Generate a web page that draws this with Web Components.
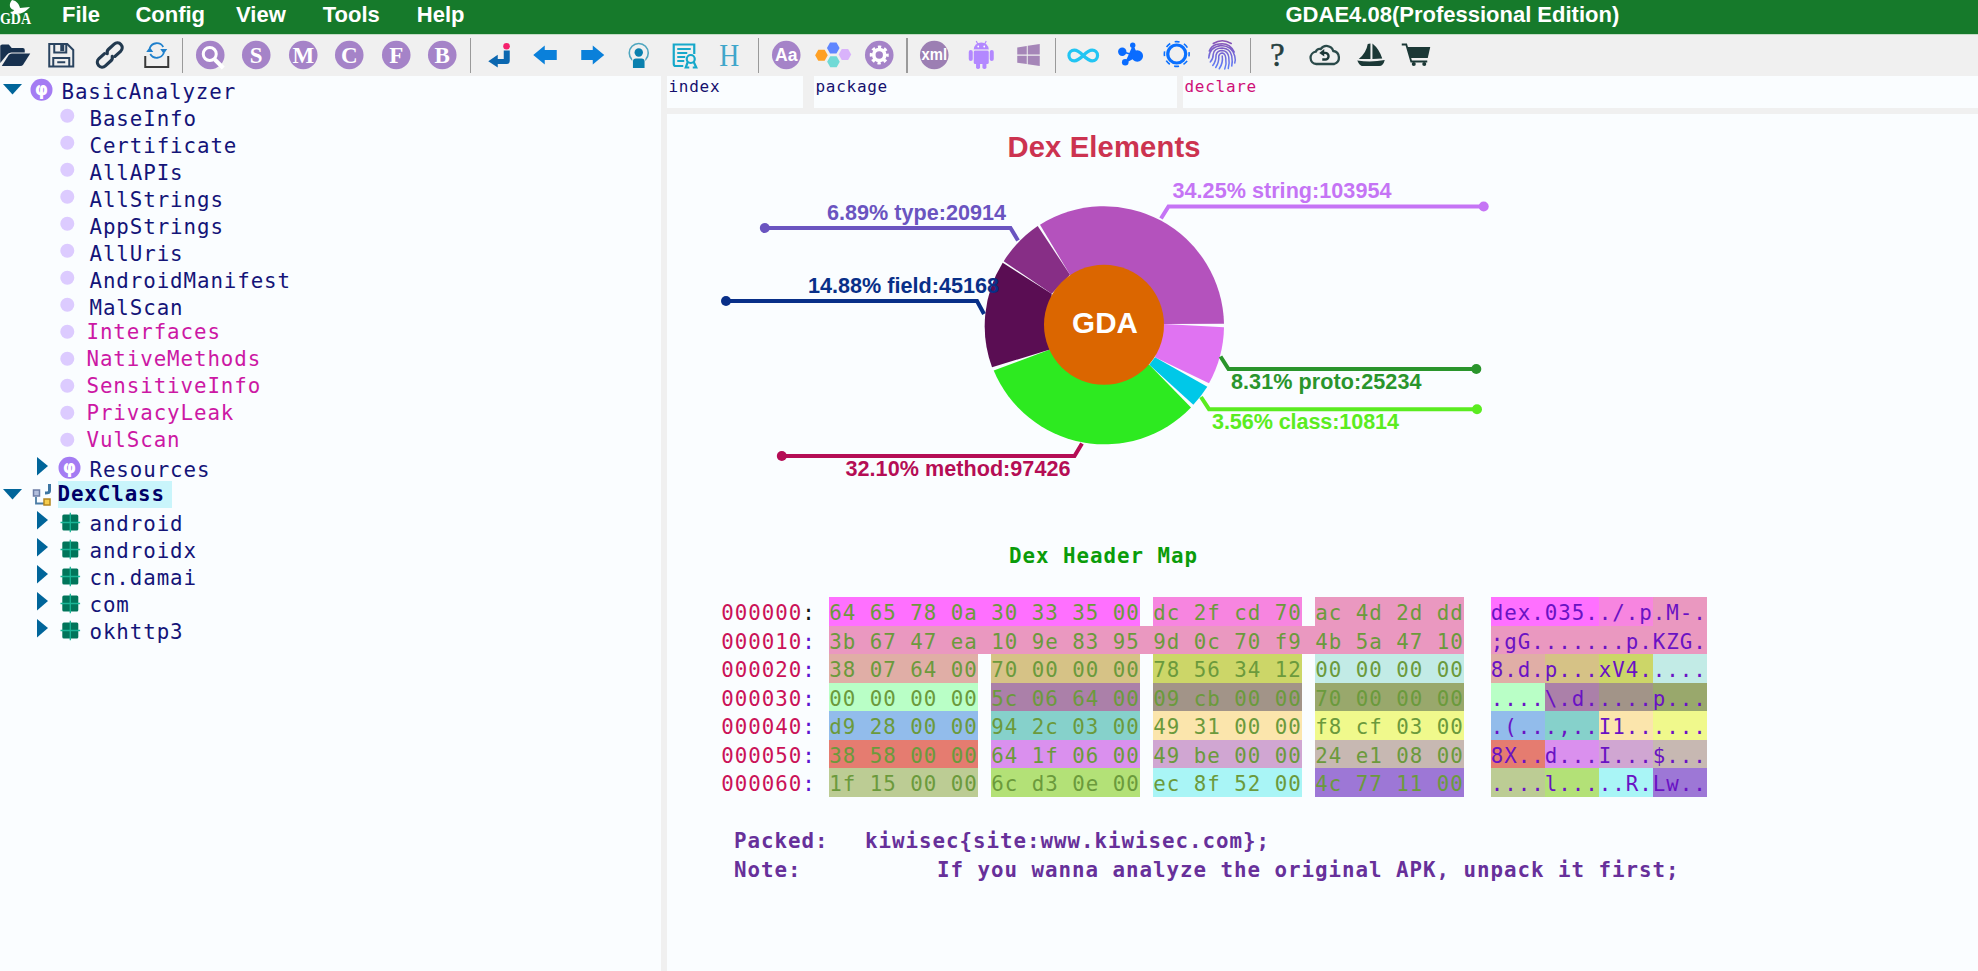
<!DOCTYPE html>
<html lang="en">
<head>
<meta charset="utf-8">
<title>GDAE4.08(Professional Edition)</title>
<style>
    html, body {
        margin: 0;
        height: 100%;
        overflow: hidden;
        background: #f0f0f0;
    }
</style>
</head>
<body>
<gda-window>
    <menu-bar slot="menu" caption="GDAE4.08(Professional Edition)"></menu-bar>
    <tool-bar slot="tools"></tool-bar>
    <class-tree slot="tree"></class-tree>
    <column-header slot="header"></column-header>
    <element-chart slot="page"></element-chart>
    <header-map slot="page"></header-map>
    <packer-note slot="page"></packer-note>
</gda-window>

<script>
class GdaWindow extends HTMLElement {
    constructor() {
        super();
        this.attachShadow({ mode: 'open' });
        this.shadowRoot.innerHTML = `
        <style>
            :host {
                display: flex;
                flex-direction: column;
                height: 971px;
                font-family: "DejaVu Sans Mono", monospace;
                --paper: #fafdff;
            }
            .body {
                flex: 1;
                display: flex;
                gap: 6px;
                min-height: 0;
            }
            .left {
                width: 661px;
                background: var(--paper);
            }
            .right {
                flex: 1;
                display: flex;
                flex-direction: column;
                gap: 6px;
                min-width: 0;
            }
            .page {
                flex: 1;
                background: var(--paper);
                overflow: hidden;
            }
        </style>
        <slot name="menu"></slot>
        <slot name="tools"></slot>
        <div class="body">
            <div class="left"><slot name="tree"></slot></div>
            <div class="right">
                <slot name="header"></slot>
                <div class="page"><slot name="page"></slot></div>
            </div>
        </div>
        `;
    }
}

class MenuBar extends HTMLElement {
    constructor() {
        super();
        this.attachShadow({ mode: 'open' });
        this.shadowRoot.innerHTML = `
        <style>
            :host {
                display: flex;
                box-sizing: border-box;
                height: 35px;
                border-bottom: 1px solid #c4dcc6;
                background: #167a2b;
                color: white;
                font: bold 22px/29px "Liberation Sans", Arial, sans-serif;
                white-space: nowrap;
            }
            svg { width: 62px; height: 30px; flex: none; }
            .items { display: flex; width: 1223.5px; }
            .items span { margin-right: 37px; }
            .items span:nth-child(1) { margin-right: 35.5px; }
            .items span:nth-child(2) { margin-right: 31px; }
        </style>
        <svg viewBox="0 0 62 30">
            <path fill="#fff" d="M12 0C17 1 19 4 20 8L30 7C26 11 23 14 16 14C13 14 11 13 10 12C12 12 14 11 14 10C10 9 8 5 12 0Z"/>
            <text x="0" y="24" font-family="Liberation Serif, serif" font-weight="bold" font-size="16" textLength="31" lengthAdjust="spacingAndGlyphs" fill="#fff">GDA</text>
        </svg>
        <div class="items">
            <span>File</span><span>Config</span><span>View</span><span>Tools</span><span>Help</span>
        </div>
        <span class="caption"></span>
        `;
    }
    connectedCallback() {
        this.shadowRoot.querySelector('.caption').textContent = this.getAttribute('caption');
    }
}

const LILAC = '#a583c8';
const disc = (content, fill = LILAC) => `<circle r="14.3" fill="${fill}"/>${content}`;
const letter = (ch) => disc(`<text y="7.500" text-anchor="middle" font-family="Liberation Serif, serif" font-weight="bold" font-size="23" fill="#fff">${ch}</text>`);
const hexagon = (x, y, fill) => `<path transform="translate(${x} ${y})" fill="${fill}" d="M-6.3 0L-3.2-5.5H3.2L6.3 0L3.2 5.5H-3.2Z"/>`;

// every glyph is drawn around 0,0, the middle of its cell
const ICONS = {
    open: `<g fill="#17314f"><path d="M-15 8V-9q0-1.5 2-1.5h6.500l3 3.500h11q2 0 2 2v2.500h-13.500q-3 0-4.500 2.500z"/><path d="M-13.500 11l7-11q1-1.500 3-1.500h18.500l-7 11q-1 1.500-3 1.500z"/></g>`,
    save: `<g fill="none" stroke="#2a4460" stroke-width="2"><path d="M-12-11H6l6 6V11.500H-12Z"/><path d="M-7-11v8.500H5V-11"/><path d="M-8 11V3H8v8M-4 7.200H4"/></g><rect x="-1" y="-10" width="4" height="6" fill="#2a4460"/>`,
    link: `<g transform="translate(1.500 0) rotate(-42)" fill="none" stroke="#22394f" stroke-width="3.200" stroke-linecap="round"><path d="M-3-4.500h-7.500a4.800 4.800 0 0 0 0 9.600H-3a4.800 4.800 0 0 0 4-2.500"/><path d="M3 4.500h7.500a4.800 4.800 0 0 0 0-9.600H3a4.800 4.800 0 0 0-4 2.500"/></g>`,
    sync: `<path d="M-9 1V12H14V1" fill="none" stroke="#3a3a3a" stroke-width="2"/><path d="M-4.500-7a7.500 7.500 0 0 1 13.500-1M9.500-2a7.500 7.500 0 0 1-13.500 1" fill="none" stroke="#2080cc" stroke-width="1.800"/><path fill="#2080cc" d="M6-6h7l-3.500 5zM-1-3h-7l3.500-5z"/>`,
    search: disc(`<circle cx="-.5" cy="-1" r="6.500" fill="none" stroke="#fff" stroke-width="3"/><path d="M4.500 4.500L13 13" stroke="#fff" stroke-width="4"/>`),
    s: letter('S'),
    m: letter('M'),
    c: letter('C'),
    f: letter('F'),
    b: letter('B'),
    enter: `<path fill="#0b67b0" d="M5.500-4.500h6V6q0 3-3 3H-.5v3.500L-10 6.200L-.5-.2V4h6z"/><circle cx="8.300" cy="-8.700" r="3.300" fill="#f5206c"/>`,
    back: `<path fill="#0a80da" d="M-11 0L.5-9.500V-5H12.500V5H.5V9.500z"/>`,
    forward: `<path fill="#0a80da" d="M13 0L1.500-9.500V-5H-10V5H1.500V9.500z"/>`,
    person: `<g transform="translate(1.500 0)"><circle cy="-2" r="9.500" fill="none" stroke="#4fa6bf" stroke-width="1.600"/><rect x="-6.500" y="3" width="13" height="11" fill="#f0f0f0"/><circle cy="-2.500" r="4.200" fill="#0a80ae"/><path fill="#0a80ae" d="M-5.800 13V6.500q0-3 3-3H2.800q3 0 3 3V13z"/></g>`,
    cert: `<g fill="none" stroke="#16a8ca" stroke-width="2.200"><path d="M-1 11H-8.500q-2 0-2-2V-10.500H10V-1"/><path d="M-7-6H6.500M-7-2H3M-7 2H1M-7 6H0" stroke-width="1.800"/><circle cx="6.500" cy="4" r="4"/><path d="M3.500 7L1.500 12.500h3.500M9.500 7L12 12.500H8.500"/></g>`,
    h: `<text x="-1" y="10.500" text-anchor="middle" font-family="Liberation Serif, serif" font-size="32" textLength="20" lengthAdjust="spacingAndGlyphs" fill="#3fa6ca">H</text>`,
    aa: disc(`<text y="6" text-anchor="middle" font-family="Liberation Sans, sans-serif" font-weight="bold" font-size="17.500" fill="#fff">Aa</text>`),
    hexes: hexagon(-10.8, .3, '#ffa024') + hexagon(1, -7, '#5f86ff') + hexagon(12.7, -.5, '#d9b3fb') + hexagon(1.2, 6.7, '#70dad6'),
    gear: disc(`<circle r="5.500" fill="none" stroke="#fff" stroke-width="3.600"/><circle r="8" fill="none" stroke="#fff" stroke-width="3" stroke-dasharray="3.283 3" stroke-dashoffset="1.600"/>`),
    xml: disc(`<text y="5" text-anchor="middle" font-family="Liberation Sans, sans-serif" font-weight="bold" font-size="16" textLength="25.500" lengthAdjust="spacingAndGlyphs" fill="#fff">xml</text>`, '#9c7fb3'),
    android: `<g fill="#b388ff"><path d="M-7.500-5.500a7.500 7 0 0 1 15 0z"/><rect x="-7.500" y="-4.500" width="15" height="13.500" rx="1.500"/><rect x="-12.500" y="-5" width="4" height="11" rx="2"/><rect x="8.500" y="-5" width="4" height="11" rx="2"/><rect x="-5.200" y="6" width="4" height="8" rx="1.800"/><rect x="1.200" y="6" width="4" height="8" rx="1.800"/><path d="M-5-14l2 4M5-14l-2 4" stroke="#b388ff" stroke-width="1.200"/></g><path d="M-7.500-5H7.500" stroke="#ddd0f5" stroke-width=".8"/><circle cx="-3" cy="-8.500" r=".9" fill="#fff"/><circle cx="3" cy="-8.500" r=".9" fill="#fff"/>`,
    windows: `<path fill="#a586b8" d="M-10-7.500L-.5-9V-.5H-10zM.5-9.200L12.500-11V-.5H.5zM-10 .7H-.5V9L-10 7.700zM.5 .7H12.500V11L.5 9.200z"/>`,
    infinity: `<path transform="translate(0 .5)" d="M0 0C-4-4-6-5.300-9-5.300A5.300 5.300 0 0 0-9 5.300C-6 5.300-4 4 0 0C4-4 6-5.300 9-5.300A5.300 5.300 0 0 1 9 5.300C6 5.300 4 4 0 0Z" fill="none" stroke="#22c5f3" stroke-width="3.200"/>`,
    nodes: `<g fill="#0a6cff"><path d="M-7-3.300L8 1M3.500-9.700L8 1L-4 7.300" stroke="#0a6cff" stroke-width="1.500"/><circle cx="-7" cy="-3.300" r="4.200"/><circle cx="3.500" cy="-9.700" r="2.700"/><circle cx="8" cy="1" r="5.800"/><circle cx="-4" cy="7.300" r="3.300"/></g>`,
    sun: `<g transform="translate(.5 -1)" fill="none" stroke="#0a70ff"><circle r="9" stroke-width="3.200"/><circle r="12.400" stroke-width="1.600" stroke-dasharray="5 4.740" stroke-dashoffset="2.500"/></g>`,
    finger: `<defs><linearGradient id="ink" x1="0" y1="-15" x2="0" y2="15" gradientUnits="userSpaceOnUse"><stop offset="0" stop-color="#8a50b0"/><stop offset="1" stop-color="#5a80ff"/></linearGradient></defs><g fill="none" stroke="url(#ink)" stroke-width="1.500" stroke-linecap="round"><path d="M-9-11.500Q0-17 9-11.500"/><path d="M-13-4Q-11-9-6-10.500Q7-14 12-3M-13.500 3Q-13-8-1-9.500Q10-9 12.500 1Q13.500 5 12.500 8"/><path d="M-12 7Q-9 4-9-1Q-8-7 0-7Q8-6.500 9.500 1Q10.500 7 9.500 11"/><path d="M-9.500 10.500Q-6 6-6.200 0Q-5-4.500 0-4.500Q5.500-4 6.500 2Q7.500 8 6 13.500"/><path d="M-6.500 12.500Q-3 7-3.500 1Q-2.500-2 0-2Q3 -1.500 3.500 3Q4.500 9 2.500 14"/><path d="M-3 13.800Q1 8 0 1"/></g>`,
    help: `<text x="-1" y="10.500" text-anchor="middle" font-family="Liberation Serif, serif" font-size="33" fill="#26403f" stroke="#26403f" stroke-width=".5">?</text>`,
    cloud: `<path transform="translate(1 -.5)" d="M-9 9.500a6.200 6.200 0 0 1-.5-12.300A4.500 4.500 0 0 1-4.500-5.500A7 7 0 0 1 8-3.500A6.700 6.700 0 0 1 9 9.500Z" fill="none" stroke="#2b4a4a" stroke-width="2.300"/><path d="M-2 4.500H1a3.300 3.300 0 0 0 0-6.600H-2" fill="none" stroke="#1c3838" stroke-width="2.400"/><path fill="#1c3838" d="M-5-2.100L0-6V1.500z"/>`,
    boat: `<path fill="#1b3836" d="M-.8-11.500V4H-12.500Q-5-2-3.500-11zM1.200-11.500Q8-6 11 3.500L1.200 4zM-14 5.500Q0 7.500 13.500 5Q12 11 8 11H-9.500Q-12 10-14 5.500z"/>`,
    cart: `<path fill="#1b3836" d="M-10-8H13L10.500 3H-7z"/><path d="M-15.500-10.500h4.500L-6 6.500H10" fill="none" stroke="#1b3836" stroke-width="1.800"/><circle cx="-3.500" cy="9" r="2" fill="#1b3836"/><circle cx="7" cy="9" r="2" fill="#1b3836"/>`,
};

class ToolBar extends HTMLElement {
    constructor() {
        super();
        this.attachShadow({ mode: 'open' });
        const groups = [
            ['open', 'save', 'link', 'sync'],
            ['search', 's', 'm', 'c', 'f', 'b'],
            ['enter', 'back', 'forward', 'person', 'cert', 'h'],
            ['aa', 'hexes', 'gear'],
            ['xml', 'android', 'windows'],
            ['infinity', 'nodes', 'sun', 'finger'],
            ['help', 'cloud', 'boat', 'cart'],
        ];
        this.shadowRoot.innerHTML = `
        <style>
            :host {
                display: flex;
                height: 41px;
                background: #f0f0f0;
                overflow: hidden;
            }
            .group { display: flex; }
            .group:first-of-type { margin-left: -8.25px; }
            .group + .group::before {
                content: "";
                width: 1.5px;
                height: 35px;
                margin: 3px 3.75px;
                background: #9a9a9a;
            }
            svg { width: 46.5px; height: 41px; }
        </style>
        ${groups.map(g => `<div class="group">${g.map(n => this._icon(n)).join('')}</div>`).join('')}
        `;
    }

    _icon(name) {
        return `<svg viewBox="-23.25 -20 46.5 41">${ICONS[name]}</svg>`;
    }
}

const NODE_ICONS = {
    phi: `<circle cx="13.500" cy="11.800" r="11" fill="#a47cf3"/><text x="13.500" y="16.500" text-anchor="middle" font-family="DejaVu Sans, sans-serif" font-weight="bold" font-size="17" letter-spacing="0" fill="#fff">φ</text>`,
    dot: `<circle cx="11.300" cy="10.700" r="7" fill="#dccbff"/>`,
    dex: `<path d="M8 14v6.500h8" fill="none" stroke="#4a7ca5" stroke-width="1.800"/><path d="M21.500 1v7q0 2-4.500 2" fill="none" stroke="#3d75a2" stroke-width="3"/><rect x="5.500" y="7" width="6" height="6" fill="#b3bfdc" stroke="#6d7da6" stroke-width="1.500"/><rect x="16" y="16" width="6" height="6" fill="#f5cd4e" stroke="#b38620" stroke-width="1.500"/>`,
    pkg: `<g transform="translate(14.300 12.500)"><rect x="-8" y="-8" width="16" height="16" rx="1.500" fill="#00755a"/><path d="M0-9.800V9.800M-9.800 0H9.800" stroke="#19b596" stroke-width="1.300"/></g>`,
};

class TreeRow extends HTMLElement {
    constructor() {
        super();
        this.attachShadow({ mode: 'open' });
    }
    connectedCallback() {
        const toggles = {
            open: '<path d="M3 6H22L12.500 16.500Z" fill="#00659a"/>',
            closed: '<path d="M9 1V19.500L20 10Z" fill="#00659a"/>',
        };
        const toggle = toggles[this.getAttribute('toggle')] || '';
        this.shadowRoot.innerHTML = `
        <style>
            :host {
                display: flex;
                height: 27px;
                font-size: 20.8px;
                line-height: 28px;
                letter-spacing: 0.91px;
                color: #141478;
            }
            :host([level="1"]) { padding-left: 28px; }
            svg { width: 28px; height: 27px; flex: none; }
            .mark { width: 33.5px; }
            :host([hot]) { color: #cc18a4; }
            :host([hot]) .mark { width: 30.5px; }
            :host([hot]) .label { line-height: 22px; }
            :host([selected]) .mark { width: 29.5px; }
            :host([selected]) .label {
                width: 114px;
                height: 27px;
                margin-top: -2px;
                line-height: 27px;
                background: #c9f5fb;
                color: #000066;
                font-weight: bold;
            }
        </style>
        <svg viewBox="0 0 28 27">${toggle}</svg>
        <svg class="mark" viewBox="0 0 ${this.hasAttribute('hot') ? 30.5 : this.hasAttribute('selected') ? 29.5 : 33.5} 27">${NODE_ICONS[this.getAttribute('icon')]}</svg>
        <div class="label"><slot></slot></div>
        `;
    }
}

class ClassTree extends HTMLElement {
    constructor() {
        super();
        this.attachShadow({ mode: 'open' });
        const plain = ['BaseInfo', 'Certificate', 'AllAPIs', 'AllStrings', 'AppStrings', 'AllUris', 'AndroidManifest', 'MalScan'];
        const hot = ['Interfaces', 'NativeMethods', 'SensitiveInfo', 'PrivacyLeak', 'VulScan'];
        const packages = ['android', 'androidx', 'cn.damai', 'com', 'okhttp3'];
        this.shadowRoot.innerHTML = `
        <style>
            :host { display: block; padding-top: 2px; }
        </style>
        <tree-row toggle="open" icon="phi">BasicAnalyzer</tree-row>
        ${plain.map(t => `<tree-row level="1" icon="dot">${t}</tree-row>`).join('')}
        ${hot.map(t => `<tree-row level="1" icon="dot" hot>${t}</tree-row>`).join('')}
        <tree-row level="1" toggle="closed" icon="phi">Resources</tree-row>
        <tree-row toggle="open" icon="dex" selected>DexClass</tree-row>
        ${packages.map(t => `<tree-row level="1" toggle="closed" icon="pkg">${t}</tree-row>`).join('')}
        `;
    }
}

class ColumnHeader extends HTMLElement {
    constructor() {
        super();
        this.attachShadow({ mode: 'open' });
        this.shadowRoot.innerHTML = `
        <style>
            :host {
                display: flex;
                height: 31.5px;
                font-size: 16px;
                line-height: 22.5px;
                letter-spacing: 0.72px;
                color: #15106e;
            }
            span {
                box-sizing: border-box;
                padding-left: 1.5px;
                background: var(--paper);
            }
            .index { width: 136px; margin-right: 11px; }
            .package { width: 363px; margin-right: 6px; }
            .declare { flex: 1; color: #cf1078; }
        </style>
        <span class="index">index</span>
        <span class="package">package</span>
        <span class="declare">declare</span>
        `;
    }
}

class ElementChart extends HTMLElement {
    constructor() {
        super();
        this.attachShadow({ mode: 'open' });
        // from/to: ends of the outer arc, a/b: matching points on the hub
        const slices = [
            { fill: '#b452bd', a: '1070 274.3', from: '1040 224.3', to: '1224 323.3', b: '1164 323.6' },
            { fill: '#e073f2', a: '1164 323.6', from: '1224 326.7', to: '1209 382.7', b: '1155 356.7' },
            { fill: '#00c8e8', a: '1155 356.7', from: '1207.3 386.3', to: '1193.3 404.3', b: '1149.3 364.3' },
            { fill: '#2dea20', a: '1149.3 364.3', from: '1191 407', to: '993.7 370', b: '1050 349' },
            { fill: '#5a0d53', a: '1050 349', from: '992 366.7', to: '1002.7 262.3', b: '1051.7 293.3' },
            { fill: '#872e86', a: '1051.7 293.3', from: '1003.7 260.7', to: '1037.7 225.5', b: '1070 274.3' },
        ];
        const labels = [
            { color: '#c574f5', text: '34.25% string:103954', x: 1172.5, y: 197.5, line: 'M1161 218L1168.500 206H1484', dot: [1483.7, 206], w: 219 },
            { color: '#2a952c', text: '8.31% proto:25234', x: 1231, y: 388.5, line: 'M1220.500 356L1228.500 368.500H1476', dot: [1476.3, 368.5], w: 190.5 },
            { color: '#5aec20', text: '3.56% class:10814', x: 1212, y: 428.5, line: 'M1201 396.500L1209 408.700H1477', dot: [1477, 408.7], w: 187 },
            { color: '#b50d55', text: '32.10% method:97426', x: 845.5, y: 475.3, line: 'M1082 443L1074.500 455.500H782', dot: [781.8, 455.5], w: 225 },
            { color: '#082f88', text: '14.88% field:45168', x: 808, y: 292.3, line: 'M984 313.500L977 300.500H726', dot: [726, 300.5], w: 191 },
            { color: '#6a54c0', text: '6.89% type:20914', x: 827, y: 219.3, line: 'M1018 240L1010.500 227.500H765', dot: [764.8, 227.5], w: 179 },
        ];
        this.shadowRoot.innerHTML = `
        <style>
            :host { display: block; height: 400px; }
            svg { display: block; width: 1311px; height: 400px; }
            text { font-family: "Liberation Sans", Arial, sans-serif; font-weight: bold; font-size: 21.6px; }
            .title { font-size: 29.2px; fill: #cc3350; }
            .hub { font-size: 29.6px; fill: white; }
        </style>
        <svg viewBox="667 113.500 1311 400">
            <text class="title" x="1007.500" y="156.500" textLength="193">Dex Elements</text>
            ${slices.map(s => `<path fill="${s.fill}" d="M${s.a}L${s.from}A120 120 0 0 1 ${s.to}L${s.b}Z"/>`).join('')}
            <circle cx="1104" cy="324.300" r="60" fill="#db6600"/>
            <text class="hub" x="1105" y="332.500" text-anchor="middle">GDA</text>
            ${labels.map(l => this._label(l)).join('')}
        </svg>
        `;
    }

    _label(l) {
        return `<path d="${l.line}" fill="none" stroke="${l.color}" stroke-width="4"/>
            <circle cx="${l.dot[0]}" cy="${l.dot[1]}" r="5" fill="${l.color}"/>
            <text x="${l.x}" y="${l.y}" textLength="${l.w}" fill="${l.color}">${l.text}</text>`;
    }
}

class HeaderMap extends HTMLElement {
    constructor() {
        super();
        this.attachShadow({ mode: 'open' });
        // [bytes, colour] for each field of the dex header
        const rows = [
            [['64 65 78 0a 30 33 35 00', '#ff70ff'], ['dc 2f cd 70', '#f785e0'], ['ac 4d 2d dd', '#ea98c0']],
            [['3b 67 47 ea 10 9e 83 95 9d 0c 70 f9 4b 5a 47 10', '#ea98c0']],
            [['38 07 64 00', '#e0aea6'], ['70 00 00 00', '#d6c286'], ['78 56 34 12', '#ccd668'], ['00 00 00 00', '#c2ebe6']],
            [['00 00 00 00', '#b9ffc6'], ['5c 06 64 00', '#ab80a9'], ['09 cb 00 00', '#a29488'], ['70 00 00 00', '#99a86c']],
            [['d9 28 00 00', '#92bceb'], ['94 2c 03 00', '#86d1cb'], ['49 31 00 00', '#fbe5ac'], ['f8 cf 03 00', '#f0f98c']],
            [['38 58 00 00', '#e57c70'], ['64 1f 06 00', '#da90ee'], ['49 be 00 00', '#d0a6d2'], ['24 e1 08 00', '#c7b8b2']],
            [['1f 15 00 00', '#bccc94'], ['6c d3 0e 00', '#b3e177'], ['ec 8f 52 00', '#a9f5f6'], ['4c 77 11 00', '#9d77d6']],
        ];
        const ascii = ['dex.035../.p.M-.', ';gG.......p.KZG.', '8.d.p...xV4.....', '....\\.d.....p...', '.(...,..I1......', '8X..d...I...$...', '....l.....R.Lw..'];
        this.shadowRoot.innerHTML = `
        <style>
            :host {
                display: block;
                padding-top: 26px;
                font-size: 20.8px;
                letter-spacing: 0.978px;
            }
            h2 {
                margin: 0 0 25.5px 342px;
                height: 32px;
                font-size: 20.8px;
                line-height: 32px;
                color: #0a9c0a;
            }
            .row {
                display: flex;
                height: 28.5px;
                padding-left: 54px;
                white-space: pre;
            }
            .row > * {
                box-sizing: border-box;
                padding-top: 3px;
                line-height: 26.45px;
                text-indent: 0.3px;
            }
            .addr { width: 108px; color: #cb1258; }
            .addr i { font-style: normal; color: #5a14d0; }
            .row:first-of-type .addr i { color: #111; }
            .bytes { margin-right: 13.5px; color: #6b9a3c; }
            .gap { width: 13.5px; }
            .chars { color: #6a12c4; }
        </style>
        <h2>Dex Header Map</h2>
        ${rows.map((r, i) => this._row(r, ascii[i], i)).join('')}
        `;
    }

    _row(fields, text, index) {
        let pos = 0;
        const bytes = fields.map(([b, c]) => `<span class="bytes" style="width:${b.length * 13.5}px;background:${c}">${b}</span>`).join('');
        const chars = fields.map(([b, c]) => {
            const count = (b.length + 1) / 3;
            const part = text.substr(pos, count);
            pos += count;
            return `<span class="chars" style="width:${count * 13.5}px;background:${c}">${part}</span>`;
        }).join('');
        return `<div class="row"><span class="addr">0000${index}0<i>:</i></span>${bytes}<span class="gap"></span>${chars}</div>`;
    }
}

class PackerNote extends HTMLElement {
    constructor() {
        super();
        this.attachShadow({ mode: 'open' });
        this.shadowRoot.innerHTML = `
        <style>
            :host {
                display: block;
                padding: 30.5px 0 0 67px;
                font-size: 20.8px;
                font-weight: bold;
                line-height: 28.8px;
                letter-spacing: 0.978px;
                color: #67309a;
                white-space: nowrap;
            }
            div { display: flex; }
            .packed { width: 131px; }
            .note { width: 203px; }
        </style>
        <div><span class="packed">Packed:</span><span>kiwisec{site:www.kiwisec.com};</span></div>
        <div><span class="note">Note:</span><span>If you wanna analyze the original APK, unpack it first;</span></div>
        `;
    }
}

customElements.define('tree-row', TreeRow);
customElements.define('class-tree', ClassTree);
customElements.define('menu-bar', MenuBar);
customElements.define('tool-bar', ToolBar);
customElements.define('column-header', ColumnHeader);
customElements.define('element-chart', ElementChart);
customElements.define('header-map', HeaderMap);
customElements.define('packer-note', PackerNote);
customElements.define('gda-window', GdaWindow);
</script>
</body>
</html>
